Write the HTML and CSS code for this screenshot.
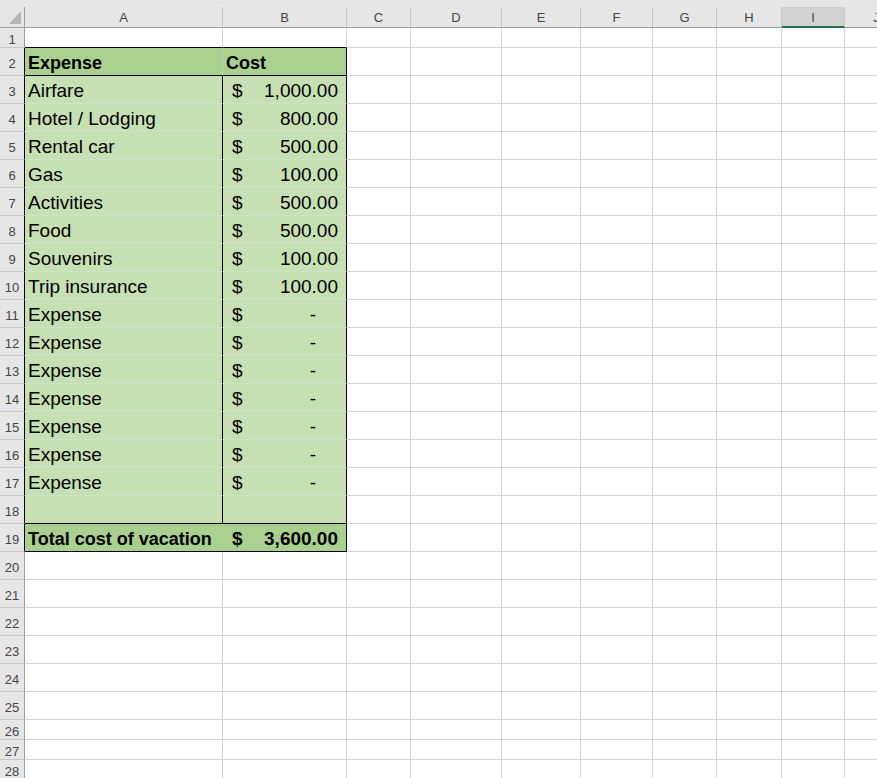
FILE: index.html
```html
<!doctype html>
<html>
<head>
<meta charset="utf-8">
<title>Vacation budget</title>
<link rel="stylesheet" href="styles.css">
</head>
<body>

<div class="sheet">

<!-- column headers -->
<div class="corner"><span class="tri"></span></div>
<div class="ch">A</div><div class="ch">B</div><div class="ch">C</div><div class="ch">D</div>
<div class="ch">E</div><div class="ch">F</div><div class="ch">G</div><div class="ch">H</div>
<div class="ch sel">I</div><div class="ch">J</div>

<!-- row 1 -->
<div class="rh">1</div><div class="bb"></div><div class="bb"></div>
<div></div><div></div><div></div><div></div><div></div><div></div><div></div><div></div>

<!-- row 2 -->
<div class="rh blk">2</div>
<div class="cell head lbl">Expense</div>
<div class="cell head cost">Cost</div>
<div></div><div></div><div></div><div></div><div></div><div></div><div></div><div></div>

<div class="rh blk">3</div>
<div class="cell lbl">Airfare</div>
<div class="cell amt"><span>$</span><span>1,000.00</span></div>
<div></div><div></div><div></div><div></div><div></div><div></div><div></div><div></div>

<div class="rh blk">4</div>
<div class="cell lbl">Hotel / Lodging</div>
<div class="cell amt"><span>$</span><span>800.00</span></div>
<div></div><div></div><div></div><div></div><div></div><div></div><div></div><div></div>

<div class="rh blk">5</div>
<div class="cell lbl">Rental car</div>
<div class="cell amt"><span>$</span><span>500.00</span></div>
<div></div><div></div><div></div><div></div><div></div><div></div><div></div><div></div>

<div class="rh blk">6</div>
<div class="cell lbl">Gas</div>
<div class="cell amt"><span>$</span><span>100.00</span></div>
<div></div><div></div><div></div><div></div><div></div><div></div><div></div><div></div>

<div class="rh blk">7</div>
<div class="cell lbl">Activities</div>
<div class="cell amt"><span>$</span><span>500.00</span></div>
<div></div><div></div><div></div><div></div><div></div><div></div><div></div><div></div>

<div class="rh blk">8</div>
<div class="cell lbl">Food</div>
<div class="cell amt"><span>$</span><span>500.00</span></div>
<div></div><div></div><div></div><div></div><div></div><div></div><div></div><div></div>

<div class="rh blk">9</div>
<div class="cell lbl">Souvenirs</div>
<div class="cell amt"><span>$</span><span>100.00</span></div>
<div></div><div></div><div></div><div></div><div></div><div></div><div></div><div></div>

<div class="rh blk">10</div>
<div class="cell lbl">Trip insurance</div>
<div class="cell amt"><span>$</span><span>100.00</span></div>
<div></div><div></div><div></div><div></div><div></div><div></div><div></div><div></div>

<div class="rh blk">11</div>
<div class="cell lbl">Expense</div>
<div class="cell amt"><span>$</span><span class="dash">-</span></div>
<div></div><div></div><div></div><div></div><div></div><div></div><div></div><div></div>

<div class="rh blk">12</div>
<div class="cell lbl">Expense</div>
<div class="cell amt"><span>$</span><span class="dash">-</span></div>
<div></div><div></div><div></div><div></div><div></div><div></div><div></div><div></div>

<div class="rh blk">13</div>
<div class="cell lbl">Expense</div>
<div class="cell amt"><span>$</span><span class="dash">-</span></div>
<div></div><div></div><div></div><div></div><div></div><div></div><div></div><div></div>

<div class="rh blk">14</div>
<div class="cell lbl">Expense</div>
<div class="cell amt"><span>$</span><span class="dash">-</span></div>
<div></div><div></div><div></div><div></div><div></div><div></div><div></div><div></div>

<div class="rh blk">15</div>
<div class="cell lbl">Expense</div>
<div class="cell amt"><span>$</span><span class="dash">-</span></div>
<div></div><div></div><div></div><div></div><div></div><div></div><div></div><div></div>

<div class="rh blk">16</div>
<div class="cell lbl">Expense</div>
<div class="cell amt"><span>$</span><span class="dash">-</span></div>
<div></div><div></div><div></div><div></div><div></div><div></div><div></div><div></div>

<div class="rh blk">17</div>
<div class="cell lbl">Expense</div>
<div class="cell amt"><span>$</span><span class="dash">-</span></div>
<div></div><div></div><div></div><div></div><div></div><div></div><div></div><div></div>

<div class="rh blk">18</div>
<div class="cell lbl bb"></div>
<div class="cell amt bb"></div>
<div></div><div></div><div></div><div></div><div></div><div></div><div></div><div></div>

<div class="rh blk">19</div>
<div class="cell head lbl total">Total cost of vacation</div>
<div class="cell head amt sum"><span>$</span><span>3,600.00</span></div>
<div></div><div></div><div></div><div></div><div></div><div></div><div></div><div></div>

<!-- empty rows -->
<div class="rh">20</div><div></div><div></div><div></div><div></div><div></div><div></div><div></div><div></div><div></div><div></div>
<div class="rh">21</div><div></div><div></div><div></div><div></div><div></div><div></div><div></div><div></div><div></div><div></div>
<div class="rh">22</div><div></div><div></div><div></div><div></div><div></div><div></div><div></div><div></div><div></div><div></div>
<div class="rh">23</div><div></div><div></div><div></div><div></div><div></div><div></div><div></div><div></div><div></div><div></div>
<div class="rh">24</div><div></div><div></div><div></div><div></div><div></div><div></div><div></div><div></div><div></div><div></div>
<div class="rh">25</div><div></div><div></div><div></div><div></div><div></div><div></div><div></div><div></div><div></div><div></div>
<div class="rh">26</div><div></div><div></div><div></div><div></div><div></div><div></div><div></div><div></div><div></div><div></div>
<div class="rh">27</div><div></div><div></div><div></div><div></div><div></div><div></div><div></div><div></div><div></div><div></div>
<div class="rh">28</div><div></div><div></div><div></div><div></div><div></div><div></div><div></div><div></div><div></div><div></div>

</div>

</body>
</html>
```

FILE: styles.css
```css
html, body {
  margin: 0 ;
  padding: 0 ;
  overflow: hidden ;
  background-color: #FFFFFF ;
}

body {
  font-family: "Liberation Sans", Arial, sans-serif ;
  color: #000000 ;
}

.sheet {
  display: grid ;
  grid-template-columns: 25px 198px 124px 64px 91px 79px 72px 64px 65px 63px 64px ;
  grid-template-rows: 21px 20px repeat(24, 28px) 20px 20px 20px ;
  padding-top: 7px ;
  background: linear-gradient(#e6e6e6, #e6e6e6) top / 100% 7px no-repeat ;
  width: 877px ;
  height: 778px ;
  overflow: hidden ;
}

.sheet > div {
  box-sizing: border-box ;
  border-right: 1px solid #d4d4d4 ;
  border-bottom: 1px solid #d4d4d4 ;
  min-width: 0 ;
}

/* headers */

.sheet > .corner {
  background-color: #e6e6e6 ;
  border-right: 1px solid #9e9e9e ;
  border-bottom: 1px solid #9e9e9e ;
  display: flex ;
  justify-content: flex-end ;
  align-items: flex-end ;
  padding: 0 3px 3px 0 ;
}

.tri {
  width: 12px ;
  height: 13px ;
  background-color: #b5b5b5 ;
  clip-path: polygon(100% 0, 100% 100%, 0 100%) ;
}

.sheet > .ch {
  background-color: #e6e6e6 ;
  border-right: 1px solid #c6c6c6 ;
  border-bottom: 1px solid #9e9e9e ;
  color: #444444 ;
  font-size: 13px ;
  text-align: center ;
  line-height: 20px ;
  padding-top: 1px ;
}

.sheet > .ch.sel {
  background-color: #d2d2d2 ;
  border-bottom: 2px solid #217346 ;
}

.sheet > .rh {
  background-color: #e6e6e6 ;
  border-right: 1px solid #9e9e9e ;
  border-bottom: 1px solid #c6c6c6 ;
  color: #444444 ;
  font-size: 13px ;
  display: flex ;
  justify-content: center ;
  align-items: center ;
  padding-top: 3px ;
}

.sheet > .rh.blk {
  border-right-color: #000000 ;
}

/* table cells */

.sheet > .cell {
  background-color: #c6e0b4 ;
  border-bottom-color: #d3dfcb ;
  border-right-color: #000000 ;
  font-size: 19px ;
  display: flex ;
  align-items: center ;
  padding-top: 3px ;
  white-space: nowrap ;
  overflow: hidden ;
}

.lbl, .cost {
  padding-left: 3px ;
}

.amt {
  justify-content: space-between ;
  padding-left: 9px ;
  padding-right: 8px ;
}

.dash {
  padding-right: 22px ;
}

.sheet > .head {
  background-color: #a9d08e ;
  font-weight: bold ;
  font-size: 18px ;
  border-bottom-color: #000000 ;
}

.sheet > .head.sum {
  font-size: 19px ;
}

.sheet > .head.lbl {
  border-right-color: #b9d6a4 ;
}

.sheet > .head.total {
  border-right-width: 0 ;
}

.sheet > .bb {
  border-bottom-color: #000000 ;
}
```
